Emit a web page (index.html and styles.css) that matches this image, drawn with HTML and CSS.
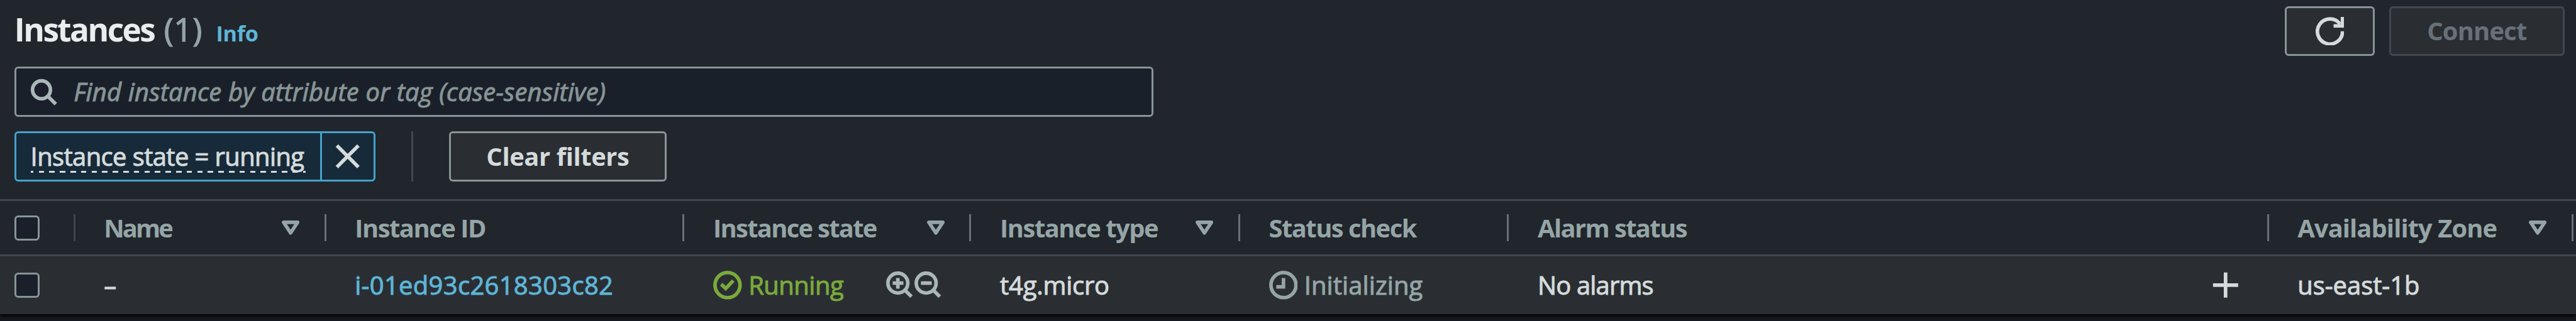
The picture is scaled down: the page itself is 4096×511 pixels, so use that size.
FILE: index.html
```html
<!DOCTYPE html>
<html lang="en">
<head>
<meta charset="utf-8">
<title>Instances</title>
<link rel="stylesheet" href="styles.css">
</head>
<body>
<svg class="defs" width="0" height="0">
  <symbol id="caret" viewBox="0 0 16 16"><path d="M4.2 4.9h7.8L8.1 10.8z" stroke-linejoin="round"/></symbol>
  <symbol id="search" viewBox="0 0 16 16"><circle cx="7" cy="7" r="5"/><path d="M10.6 10.6l4.4 4.4"/></symbol>
</svg>
<main class="panel">
  <header class="header">
    <h1 class="title"><span class="name">Instances</span><span class="count">(1)</span><a class="info">Info</a></h1>
    <div class="actions">
      <button class="btn btn-refresh"><svg class="icon" viewBox="0 0 16 16"><path d="M15 8A7 7 0 1 1 13.6 3.9M15 0v5h-5"/></svg></button>
      <button class="btn btn-connect">Connect</button>
    </div>
  </header>
  <div class="search">
    <svg class="icon"><use href="#search"/></svg>
    <span class="placeholder">Find instance by attribute or tag (case-sensitive)</span>
  </div>
  <div class="filters">
    <div class="token">
      <div class="token-label"><span>Instance state = running</span></div>
      <div class="token-close"><svg class="icon" viewBox="0 0 16 16"><path d="M2 2l12 12M14 2L2 14"/></svg></div>
    </div>
    <div class="rule"></div>
    <button class="btn btn-clear">Clear filters</button>
  </div>
  <section class="table">
    <div class="row head">
      <div class="cell check dim"><i class="box"></i></div>
      <div class="cell"><span class="t-name">Name</span><svg class="icon caret"><use href="#caret"/></svg></div>
      <div class="cell"><span class="t-id">Instance ID</span></div>
      <div class="cell"><span class="t-state">Instance state</span><svg class="icon caret"><use href="#caret"/></svg></div>
      <div class="cell"><span class="t-type">Instance type</span><svg class="icon caret"><use href="#caret"/></svg></div>
      <div class="cell"><span class="t-status">Status check</span></div>
      <div class="cell"><span class="t-alarm">Alarm status</span></div>
      <div class="cell"><span class="t-zone">Availability Zone</span><svg class="icon caret"><use href="#caret"/></svg></div>
    </div>
    <div class="row item">
      <div class="cell check"><i class="box"></i></div>
      <div class="cell"><span>–</span></div>
      <div class="cell"><a class="v-id">i-01ed93c2618303c82</a></div>
      <div class="cell">
        <span class="status running"><svg class="icon" viewBox="0 0 16 16"><circle cx="8" cy="8" r="7"/><path d="M4.5 7.5L7 9.9l4.2-4.4"/></svg><span>Running</span></span>
        <span class="tools">
          <svg class="icon" viewBox="0 0 16 16"><circle cx="6.9" cy="6.9" r="5.55"/><path d="M10.8 10.8l3.7 3.7M6.9 4v6M4 6.9h6"/></svg><svg class="icon" viewBox="0 0 16 16"><circle cx="6.9" cy="6.9" r="5.55"/><path d="M10.8 10.8l3.7 3.7M4 6.9h6"/></svg>
        </span>
      </div>
      <div class="cell"><span class="v-type">t4g.micro</span></div>
      <div class="cell"><span class="status pending"><svg class="icon" viewBox="0 0 16 16"><circle cx="8" cy="8" r="7"/><path d="M8 4v5H4"/></svg><span>Initializing</span></span></div>
      <div class="cell"><span class="v-alarm">No alarms</span><svg class="icon plus" viewBox="0 0 16 16"><path d="M8 1v14M1 8h14"/></svg></div>
      <div class="cell"><span class="v-zone">us-east-1b</span></div>
    </div>
  </section>
</main>
</body>
</html>
```
FILE: styles.css
```css
* { box-sizing: border-box; }
html, body { height: 100%; }
body {
  margin: 0;
  overflow: hidden;
  background: #16191f;
  color: #d5dbdb;
  font: 39.9px/80px "Open Sans", "Noto Sans", sans-serif;
  white-space: nowrap;
}
.defs { display: block; height: 0; }
.panel { height: 499.7px; background: #21252c; box-shadow: 0 3px 6px #000; }
.icon {
  display: block;
  flex: none;
  width: 45.6px;
  height: 45.6px;
  fill: none;
  stroke: currentColor;
  stroke-width: 2;
}

.header {
  display: flex;
  justify-content: space-between;
  height: 106.4px;
  padding: 9.5px 18px 0 22.8px;
}
.title {
  display: flex;
  align-items: baseline;
  margin: -4px 0 0;
  font-size: 51.3px;
  line-height: 80px;
}
.name { color: #eaeded; letter-spacing: -2.55px; }
.count { margin-left: 15.5px; color: #95a5a6; font-weight: 400; letter-spacing: .5px; -webkit-text-stroke: 1.2px; }
.info { margin-left: 21.6px; color: #5eb5d6; font-size: 34.2px; letter-spacing: -.2px; }
.actions { display: flex; gap: 22.8px; }
.btn {
  display: flex;
  align-items: center;
  justify-content: center;
  height: 79.8px;
  padding: 0;
  border: 3px solid #879596;
  border-radius: 6px;
  background: #2a2e33;
  color: #d5dbdb;
  font: bold 39.9px/74px "Open Sans", "Noto Sans", sans-serif;
}
.btn-refresh { width: 142.5px; }
.btn-connect { width: 279.3px; border-color: #414750; color: #687078; letter-spacing: -.81px; }
.btn-clear { width: 346.7px; letter-spacing: -.4px; }

.search {
  display: flex;
  align-items: center;
  width: 1811px;
  height: 79.8px;
  margin-left: 22.8px;
  padding-left: 19.8px;
  border: 3px solid #879596;
  border-radius: 6px;
  background: #1a2029;
  color: #aab7b8;
}
.placeholder { margin-left: 26px; color: #879596; font-style: italic; letter-spacing: .21px; -webkit-text-stroke: 1px; }

.filters { display: flex; height: 131px; padding: 22.8px 0 0 22.8px; }
.token {
  display: flex;
  width: 573.8px;
  height: 79.8px;
  border: 3px solid #44a3ca;
  border-radius: 6px;
  background: #172a3a;
}
.token-label { width: 485.8px; padding-left: 22.8px; border-right: 3px solid #44a3ca; line-height: 74px; }
.token-label span {
  display: block;
  width: 437px;
  letter-spacing: -.58px;
  -webkit-text-stroke: 1px;
  background: repeating-linear-gradient(90deg, #d5dbdb 0 4.5px, transparent 4.5px 12.7px, #d5dbdb 12.7px 16.8px) 0 60px / 100% 3px no-repeat;
}
.token-close { flex: 1; display: flex; align-items: center; justify-content: center; }
.rule { width: 3px; height: 79.8px; margin: 0 57px; background: #414750; }

.row {
  display: grid;
  grid-template-columns: 119.7px 398.9px 569.9px 456px 427.5px 427.5px 1208.2px 484.4px;
  border-top: 3px solid #414750;
}
.head { height: 88.3px; color: #95a5a6; font-weight: 700; }
.item { height: 94.1px; background: #2a2e33; -webkit-text-stroke: 1px; }
.cell { display: flex; align-items: center; padding-left: 45.6px; }
.cell.check { padding-left: 22.8px; }
.head .cell {
  background: linear-gradient(#687078, #687078) right center / 3px 43px no-repeat;
}
.head .cell.dim { background-image: linear-gradient(#414750, #414750); }
.box {
  width: 40px;
  height: 40px;
  border: 3px solid #879596;
  border-radius: 6px;
  background: #1a2029;
}
.caret { margin: 0 34.2px 0 auto; }
.tools { display: flex; margin: 0 45.6px 0 auto; color: #aab7b8; }
.plus { margin: 0 45.6px 0 auto; }
.status { display: flex; align-items: center; gap: 10.5px; }
.running { color: #7aaa3c; letter-spacing: -.47px; }
.pending { color: #95a5a6; letter-spacing: .12px; }

.t-name { letter-spacing: -2.9px; }
.t-id, .t-type { letter-spacing: -1.47px; }
.t-state { letter-spacing: -1.7px; }
.t-alarm { letter-spacing: -1.6px; }
.t-status { letter-spacing: -1.53px; }
.t-zone { letter-spacing: -.91px; }
.v-id { color: #5eb5d6; letter-spacing: .35px; }
.v-type { letter-spacing: -.2px; }
.v-alarm { letter-spacing: -.82px; }
```
